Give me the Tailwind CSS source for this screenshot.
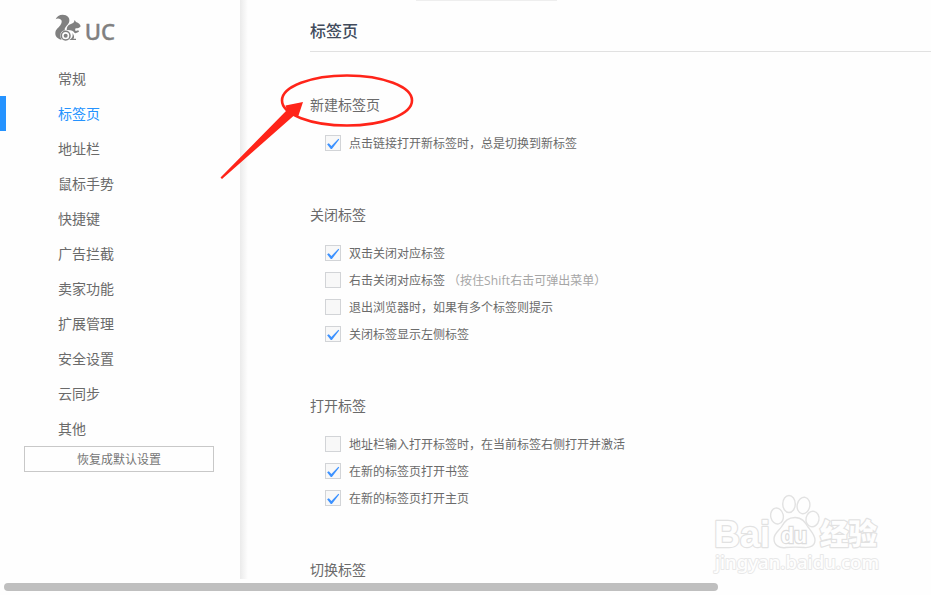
<!DOCTYPE html>
<html lang="zh-CN">

<head>
    <meta charset="UTF-8">
    <meta name="viewport" content="width=device-width, initial-scale=1.0">
    <title>标签页</title>
    <script src="https://cdn.jsdelivr.net/npm/@tailwindcss/browser@4"></script>
</head>

<body class="relative flex h-screen flex-col overflow-hidden bg-[#fefefe] font-['Noto_Sans_CJK_SC',sans-serif] text-[#6a6a6a]">
    <!-- check mark shared by all checkboxes -->
    <svg class="hidden">
        <symbol id="check" viewBox="0 0 14 14">
            <path d="M1.1 8.2 L2.8 7.2 L5.4 10 L12.4 2.8 L13.2 3.5 L5.9 13 L4.8 13 Z" fill="#3d92ff" />
        </symbol>
    </svg>

    <div class="flex h-[579px] shrink-0 overflow-hidden">
        <aside class="w-60 shrink-0">
            <div class="flex h-[61px] pt-3.5 pl-[55px]">
                <svg class="h-[27px] w-[62px] overflow-visible" viewBox="45 27 186 81">
                    <g fill="#808080">
                        <path d="M47 43 C50 34 58 29 68 29 C82 29 90 38 88 49 C87 57 80 61 77 66 C74 70 73 73 75 76 C66 77 61 84 61 91 C61 96 62 100 65 104 C52 102 45 93 46 83 C47 73 56 68 61 61 C66 54 67 46 61 43 C57 40 51 40 47 43 Z" />
                        <path d="M80 75 C80 66 84 60 91 58 C96 56 100 54 102 51 L104 45 L108 51 C116 53 121 58 122 64 C119 69 113 70 107 70 C105 73 105 75 107 78 L115 76 L117 80 L107 85 L104 84 C101 78 92 74 80 75 Z" />
                        <path d="M97 84 C103 91 104 98 100 101 L108 101 L108 105 L88 105 C97 100 100 93 97 84 Z" />
                    </g>
                    <circle cx="77" cy="92" r="13" fill="none" stroke="#808080" stroke-width="4.5" />
                    <circle cx="77" cy="92" r="6" fill="#808080" />
                    <text x="134" y="104" font-family="Noto Sans" font-size="66" font-weight="500" fill="#808080" stroke="#808080" textLength="91" lengthAdjust="spacingAndGlyphs">UC</text>
                </svg>
            </div>
            <nav class="text-sm">
                <a class="flex h-[35px] items-center pb-0.5 pl-[58px]">常规</a>
                <a class="flex h-[35px] items-center border-l-6 border-[#2593ff] pb-0.5 pl-[52px] text-[#2593ff]">标签页</a>
                <a class="flex h-[35px] items-center pb-0.5 pl-[58px]">地址栏</a>
                <a class="flex h-[35px] items-center pb-0.5 pl-[58px]">鼠标手势</a>
                <a class="flex h-[35px] items-center pb-0.5 pl-[58px]">快捷键</a>
                <a class="flex h-[35px] items-center pb-0.5 pl-[58px]">广告拦截</a>
                <a class="flex h-[35px] items-center pb-0.5 pl-[58px]">卖家功能</a>
                <a class="flex h-[35px] items-center pb-0.5 pl-[58px]">扩展管理</a>
                <a class="flex h-[35px] items-center pb-0.5 pl-[58px]">安全设置</a>
                <a class="flex h-[35px] items-center pb-0.5 pl-[58px]">云同步</a>
                <a class="flex h-[35px] items-center pb-0.5 pl-[58px]">其他</a>
            </nav>
            <button class="ml-6 flex h-[26px] w-[190px] items-center justify-center border border-[#c8c8c8] text-xs text-[#767676]">恢复成默认设置</button>
        </aside>
        <div class="w-2 shrink-0 bg-linear-to-r from-[#ebebeb] to-[#fefefe]"></div>

        <main class="flex-1 pl-[62px]">
            <div class="h-px">
                <div class="ml-[106px] h-px w-[141px] bg-[#eeeeee]"></div>
            </div>
            <h1 class="flex h-[51px] items-center border-b border-[#e1e1e1] pt-2 text-base font-medium text-[#414b5c]">标签页</h1>

            <div class="mt-[42px] flex flex-col gap-[53px]">
                <section>
                    <h2 class="text-sm/5">新建标签页</h2>
                    <div class="mt-[21px] ml-[15px] flex flex-col gap-[11px] text-xs/4">
                        <label class="flex h-4 gap-2"><span class="size-4 border border-[#d2d4d7] bg-[#f8f8f8]"><svg class="size-3.5"><use href="#check" /></svg></span>点击链接打开新标签时，总是切换到新标签</label>
                    </div>
                </section>
                <section>
                    <h2 class="text-sm/5">关闭标签</h2>
                    <div class="mt-[21px] ml-[15px] flex flex-col gap-[11px] text-xs/4">
                        <label class="flex h-4 gap-2"><span class="size-4 border border-[#d2d4d7] bg-[#f8f8f8]"><svg class="size-3.5"><use href="#check" /></svg></span>双击关闭对应标签</label>
                        <label class="flex h-4 gap-2"><span class="size-4 border border-[#d2d4d7] bg-[#f8f8f8]"></span><span>右击关闭对应标签<span class="ml-[3px] text-[#a6a6a6]">（按住<span class="font-['Open_Sans'] tracking-[0.2px]">Shift</span>右击可弹出菜单）</span></span></label>
                        <label class="flex h-4 gap-2"><span class="size-4 border border-[#d2d4d7] bg-[#f8f8f8]"></span>退出浏览器时，如果有多个标签则提示</label>
                        <label class="flex h-4 gap-2"><span class="size-4 border border-[#d2d4d7] bg-[#f8f8f8]"><svg class="size-3.5"><use href="#check" /></svg></span>关闭标签显示左侧标签</label>
                    </div>
                </section>
                <section>
                    <h2 class="text-sm/5">打开标签</h2>
                    <div class="mt-[21px] ml-[15px] flex flex-col gap-[11px] text-xs/4">
                        <label class="flex h-4 gap-2"><span class="size-4 border border-[#d2d4d7] bg-[#f8f8f8]"></span>地址栏输入打开标签时，在当前标签右侧打开并激活</label>
                        <label class="flex h-4 gap-2"><span class="size-4 border border-[#d2d4d7] bg-[#f8f8f8]"><svg class="size-3.5"><use href="#check" /></svg></span>在新的标签页打开书签</label>
                        <label class="flex h-4 gap-2"><span class="size-4 border border-[#d2d4d7] bg-[#f8f8f8]"><svg class="size-3.5"><use href="#check" /></svg></span>在新的标签页打开主页</label>
                    </div>
                </section>
                <section>
                    <h2 class="text-sm/5">切换标签</h2>
                </section>
            </div>
        </main>
    </div>

    <!-- horizontal scrollbar -->
    <div class="mt-1 ml-1 h-2 w-[714px] shrink-0 rounded-full bg-[#bfbfbf]"></div>

    <!-- red ellipse and arrow -->
    <svg class="absolute top-[70px] left-[215px] h-[115px] w-[205px]" viewBox="215 70 205 115">
        <ellipse cx="347" cy="100.5" rx="65" ry="25" fill="none" stroke="#ff2419" stroke-width="2.6" />
        <path d="M220.5 177.5 L287 110 L285.5 105.5 L303 102 L298 117 L294 115.5 L222 179 Z" fill="#ff2419" />
    </svg>

    <!-- watermark -->
    <svg class="absolute top-[490px] left-[708px] h-[90px] w-[180px]" viewBox="708 490 180 90">
        <g fill="#fefefe" stroke="#e2e2e2" stroke-width="1.4">
            <g stroke-width="2.4" paint-order="stroke" stroke-linejoin="round">
                <text x="714" y="547" font-family="Liberation Sans" font-size="37" font-weight="700" textLength="56" lengthAdjust="spacingAndGlyphs">Bai</text>
                <text x="820" y="545" font-family="Noto Sans CJK SC" font-size="29" font-weight="900" textLength="57" lengthAdjust="spacingAndGlyphs">经验</text>
                <text x="715" y="569" font-family="Noto Sans" font-size="18" font-weight="500" stroke="#e8e8e8" stroke-width="1.8" textLength="164" lengthAdjust="spacingAndGlyphs">jingyan.baidu.com</text>
            </g>
            <ellipse cx="777" cy="516" rx="6.3" ry="8" transform="rotate(-12 777 516)" />
            <ellipse cx="789" cy="504" rx="6.3" ry="8.5" />
            <ellipse cx="803.5" cy="505.5" rx="6.3" ry="8.3" transform="rotate(12 803.5 505.5)" />
            <ellipse cx="812.5" cy="519" rx="6.5" ry="7.8" transform="rotate(12 812.5 519)" />
            <path d="M795 517.5 C802 517.5 805 522 808 527 C811 531 815 535 815 540 C815 546 810 548 804 547.5 C798 547 792 547 786 547.5 C779 548.5 774 545 774 539 C774 533 779 531 782 526 C785 521 788 517.5 795 517.5 Z" />
            <text x="781" y="543" font-family="Liberation Sans" font-size="22" font-weight="700" stroke="#dcdcdc" stroke-width="2.4" paint-order="stroke" textLength="26" lengthAdjust="spacingAndGlyphs">du</text>
        </g>
    </svg>
</body>

</html>
